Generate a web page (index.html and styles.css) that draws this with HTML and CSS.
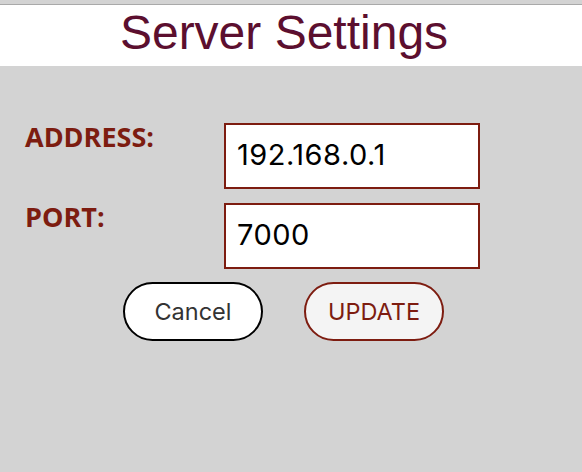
FILE: index.html
```html
<!DOCTYPE html>
<html lang="en">
<head>
<meta charset="utf-8">
<title>Server Settings</title>
<link rel="stylesheet" href="styles.css">
</head>
<body>
<div class="topbar"></div>
<header class="header">
  <h1 class="title">Server Settings</h1>
</header>
<main class="settings">
  <form class="form">
    <label class="label" for="address">ADDRESS:</label>
    <input class="field" id="address" type="text" value="192.168.0.1">
    <label class="label" for="port">PORT:</label>
    <input class="field" id="port" type="text" value="7000">
  </form>
  <div class="actions">
    <button class="btn btn-cancel" type="button">Cancel</button>
    <button class="btn btn-update" type="button">UPDATE</button>
  </div>
</main>
</body>
</html>
```

FILE: styles.css
```css
html, body {
  margin: 0;
  padding: 0;
}

body {
  background: #d3d3d3;
  font-family: "Liberation Sans", Arial, sans-serif;
  min-height: 472px;
}

.topbar {
  height: 4px;
  background: #d3d3d3;
  border-bottom: 1px solid #a9a9a9;
}

.header {
  background: #ffffff;
  height: 61px;
  padding-right: 14px;
  box-sizing: border-box;
}

.title {
  margin: 0;
  font-family: "Liberation Sans", Arial, sans-serif;
  font-weight: normal;
  font-size: 48px;
  line-height: 55px;
  text-align: center;
  color: #5c0f2f;
}

.settings {
  padding-top: 57px;
}

.form {
  display: grid;
  grid-template-columns: 199px 256px;
  row-gap: 14px;
  padding-left: 25px;
  margin: 0;
}

.label {
  align-self: start;
  padding-top: 1px;
  font-family: "Open Sans", sans-serif;
  font-weight: bold;
  font-size: 27px;
  line-height: 26px;
  color: #7d1c10;
}

.field {
  box-sizing: border-box;
  width: 256px;
  height: 66px;
  margin: 0;
  border: 2px solid #7d1c10;
  border-radius: 0;
  background: #ffffff;
  padding: 0 8px 4px 11px;
  font-family: Inter, "Liberation Sans", sans-serif;
  font-size: 29px;
  letter-spacing: 0.5px;
  color: #000000;
  outline: none;
}

.actions {
  display: flex;
  justify-content: center;
  gap: 41px;
  padding-right: 15px;
  margin-top: 13px;
}

.btn {
  box-sizing: border-box;
  width: 140px;
  height: 59px;
  border-radius: 30px;
  font-family: Inter, "Liberation Sans", sans-serif;
  font-size: 23.5px;
  padding: 0;
  cursor: pointer;
}

.btn-cancel {
  background: #ffffff;
  border: 2px solid #000000;
  color: #333333;
}

.btn-update {
  background: #f4f4f4;
  border: 2px solid #7d1c10;
  color: #7d1c10;
}
```
